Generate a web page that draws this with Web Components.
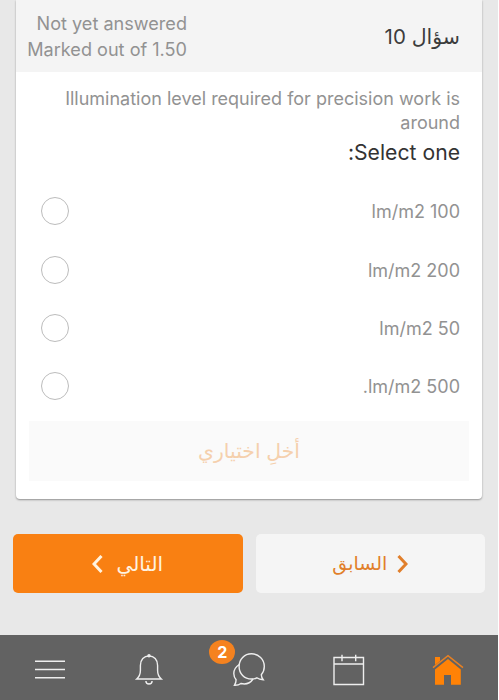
<!DOCTYPE html>
<html lang="ar" dir="rtl">
<head>
<meta charset="utf-8">
<title>Quiz</title>
<style>
  html {
    background: #fff;
  }

  body {
    margin: 0;
    font-family: Inter, "Noto Sans", "DejaVu Sans", sans-serif;
  }
</style>
</head>
<body>
<quiz-page>
  <question-card>
    <span slot="title">سؤال 10</span>
    <span slot="state">Not yet answered</span>
    <span slot="grade">Marked out of 1.50</span>
    <span slot="text">Illumination level required for precision work is<br>around</span>
    <span slot="prompt">Select one:</span>
    <answer-option>100 lm/m2</answer-option>
    <answer-option>200 lm/m2</answer-option>
    <answer-option>50 lm/m2</answer-option>
    <answer-option>500 lm/m2.</answer-option>
    <span slot="clear">أخلِ اختياري</span>
  </question-card>
  <nav-button slot="nav" kind="previous">السابق</nav-button>
  <nav-button slot="nav" kind="next">التالي</nav-button>
  <tab-bar slot="tabs">
    <tab-item icon="home"></tab-item>
    <tab-item icon="calendar"></tab-item>
    <tab-item icon="chat" badge="2"></tab-item>
    <tab-item icon="bell"></tab-item>
    <tab-item icon="menu"></tab-item>
  </tab-bar>
</quiz-page>

<script>
class QuizPage extends HTMLElement {
  static template = `
    <style>
      :host {
        display: flex;
        flex-direction: column;
        box-sizing: border-box;
        width: 498px;
        height: 700px;
        margin-right: 1px;
        overflow: hidden;
        background: #e8e8e8;
      }

      nav {
        display: grid;
        grid-template-columns: 1fr 1fr;
        gap: 13px;
        margin: 35px 13px 0;
      }

      footer {
        margin-top: auto;
      }
    </style>
    <slot></slot>
    <nav><slot name="nav"></slot></nav>
    <footer><slot name="tabs"></slot></footer>
  `;

  constructor() {
    super();
    this.attachShadow({ mode: "open" });
    this.shadowRoot.innerHTML = QuizPage.template;
  }
}

class QuestionCard extends HTMLElement {
  static template = `
    <style>
      :host {
        display: block;
        box-sizing: border-box;
        height: 499px;
        margin: 0 16px;
        background: #fff;
        border-radius: 0 0 4px 4px;
        box-shadow: 0 1px 2px rgba(0, 0, 0, 0.38);
        color: #929292;
        font-size: 18px;
      }

      header {
        display: flex;
        align-items: center;
        justify-content: space-between;
        box-sizing: border-box;
        height: 72px;
        padding-right: 22px;
        background: #f4f4f4;
      }

      h2 {
        margin: 0;
        color: #3c3c3c;
        font-size: 20.5px;
        font-weight: 400;
        white-space: nowrap;
      }

      .info {
        display: flex;
        flex-direction: column;
        width: 171px;
        font-size: 18.1px;
        line-height: 26px;
        white-space: nowrap;
      }

      .text {
        margin: 15px 22px 0;
        line-height: 24px;
        white-space: nowrap;
      }

      .prompt {
        margin: 3px 22px 16px;
        color: #333;
        font-size: 21.2px;
        line-height: 28px;
      }

      button {
        display: block;
        width: calc(100% - 26px);
        height: 60px;
        margin: 5px 13px 0;
        padding: 0;
        border: 0;
        background: #fafafa;
        color: #f5d0ad;
        font: inherit;
        font-size: 20.4px;
      }
    </style>
    <header>
      <h2><slot name="title"></slot></h2>
      <div class="info">
        <slot name="state"></slot>
        <slot name="grade"></slot>
      </div>
    </header>
    <div class="text"><slot name="text"></slot></div>
    <div class="prompt"><slot name="prompt"></slot></div>
    <slot></slot>
    <button disabled><slot name="clear"></slot></button>
  `;

  constructor() {
    super();
    this.attachShadow({ mode: "open" });
    this.shadowRoot.innerHTML = QuestionCard.template;
  }
}

class AnswerOption extends HTMLElement {
  static template = `
    <style>
      :host {
        display: flex;
        align-items: center;
        justify-content: space-between;
        height: 58.4px;
        padding: 0 22px 0 25px;
        white-space: nowrap;
      }

      .label {
        padding-top: 1px;
      }

      .radio {
        box-sizing: border-box;
        width: 28px;
        height: 28px;
        border: 1px solid #bcbcbc;
        border-radius: 50%;
      }
    </style>
    <span class="label"><slot></slot></span>
    <span class="radio"></span>
  `;

  constructor() {
    super();
    this.attachShadow({ mode: "open" });
    this.shadowRoot.innerHTML = AnswerOption.template;
  }
}

class NavButton extends HTMLElement {
  static template = `
    <style>
      :host {
        display: flex;
        align-items: center;
        justify-content: center;
        gap: 10px;
        height: 59px;
        border-radius: 5px;
        background: #f5f5f5;
        color: #e17f2b;
        font-size: 19px;
      }

      :host([kind="next"]) {
        flex-direction: row-reverse;
        gap: 13px;
        background: #f98012;
        color: #fff3e0;
        font-size: 20px;
      }

      svg {
        width: 11px;
        height: 18px;
        fill: none;
        stroke: currentColor;
        stroke-width: 3;
      }

      :host([kind="next"]) svg {
        transform: scaleX(-1);
      }
    </style>
    <svg viewBox="0 0 11 18"><path d="M1.5 1 9 9l-7.5 8"/></svg>
    <span><slot></slot></span>
  `;

  constructor() {
    super();
    this.attachShadow({ mode: "open" });
    this.shadowRoot.innerHTML = NavButton.template;
  }
}

class TabBar extends HTMLElement {
  static template = `
    <style>
      :host {
        display: grid;
        grid-template-columns: repeat(5, 1fr);
        height: 65px;
        background: #626262;
      }
    </style>
    <slot></slot>
  `;

  constructor() {
    super();
    this.attachShadow({ mode: "open" });
    this.shadowRoot.innerHTML = TabBar.template;
  }
}

class TabItem extends HTMLElement {
  static icons = {
    home: `<g fill="#ff8206" stroke="none">
      <path d="M3 4h5v4L3 12z"/>
      <path d="M3 16.500 16 6l12.800 10.500v15.200H19V22h-7v9.700H3z"/>
    </g>
    <path d="M1 14.700 16 2.700l15 12" stroke="#e88022" stroke-width="1.500"/>`,
    calendar: `<path d="M1 4.500h29.500v27H1zM1 11h29.500M9 1.700v6.500M22.700 1.700v6.500"/>`,
    chat: `<path d="M18.500.8c7.200 0 12.800 5.500 12.800 12.700 0 3.500-1.100 6-3 8.200.1 1.900.7 3.600 1.900 5-2.500 0-4.700-.6-6.400-1.900-1.500.8-3.400 1.200-5.300 1.200-7.200 0-12.400-5.300-12.400-12.500S11.300.8 18.500.8z"/>
      <path d="M6.300 11.500C2.800 13.700.8 16.800.8 20.500c0 2.700.9 4.600 2.300 6.300 0 2-.5 3.800-1.600 5.400 2.700.1 4.800-.5 6.400-1.700 4.700 1.200 9.200-.2 12.200-4.500"/>`,
    bell: `<path d="M3.700 26c2.600-2.300 3.700-5 3.700-8.500V12.500C7.400 6.700 10.900 3 16 3s8.600 3.700 8.600 9.500v5c0 3.500 1.100 6.200 3.700 8.500zM12.900 28c0 4 6.200 4 6.200 0"/>
      <circle cx="16" cy="2.700" r="1" fill="#eee"/>`,
    menu: `<path d="M1 8.300h30M1 16.500h30M1 24.700h30"/>`
  };

  static style = `
    <style>
      :host {
        position: relative;
        display: flex;
        align-items: center;
        justify-content: center;
        padding-top: 3px;
      }

      svg {
        width: 32px;
        height: 32px;
        overflow: visible;
        fill: none;
        stroke: #eee;
        stroke-width: 1.4;
      }

      .badge {
        position: absolute;
        top: 5px;
        left: 10px;
        width: 26px;
        height: 24px;
        border-radius: 50%;
        background: #f5821f;
        color: #fff;
        font-size: 16px;
        font-weight: 700;
        line-height: 24px;
        text-align: center;
      }
    </style>
  `;

  constructor() {
    super();
    this.attachShadow({ mode: "open" });
  }

  connectedCallback() {
    const icon = TabItem.icons[this.getAttribute("icon")];
    const badge = this.getAttribute("badge");

    this.shadowRoot.innerHTML = TabItem.style;
    this.shadowRoot.innerHTML += `<svg viewBox="0 0 32 32">${icon}</svg>`;
    if (badge) {
      this.shadowRoot.innerHTML += `<span class="badge">${badge}</span>`;
    }
  }
}

customElements.define("quiz-page", QuizPage);
customElements.define("question-card", QuestionCard);
customElements.define("answer-option", AnswerOption);
customElements.define("nav-button", NavButton);
customElements.define("tab-bar", TabBar);
customElements.define("tab-item", TabItem);
</script>
</body>
</html>
